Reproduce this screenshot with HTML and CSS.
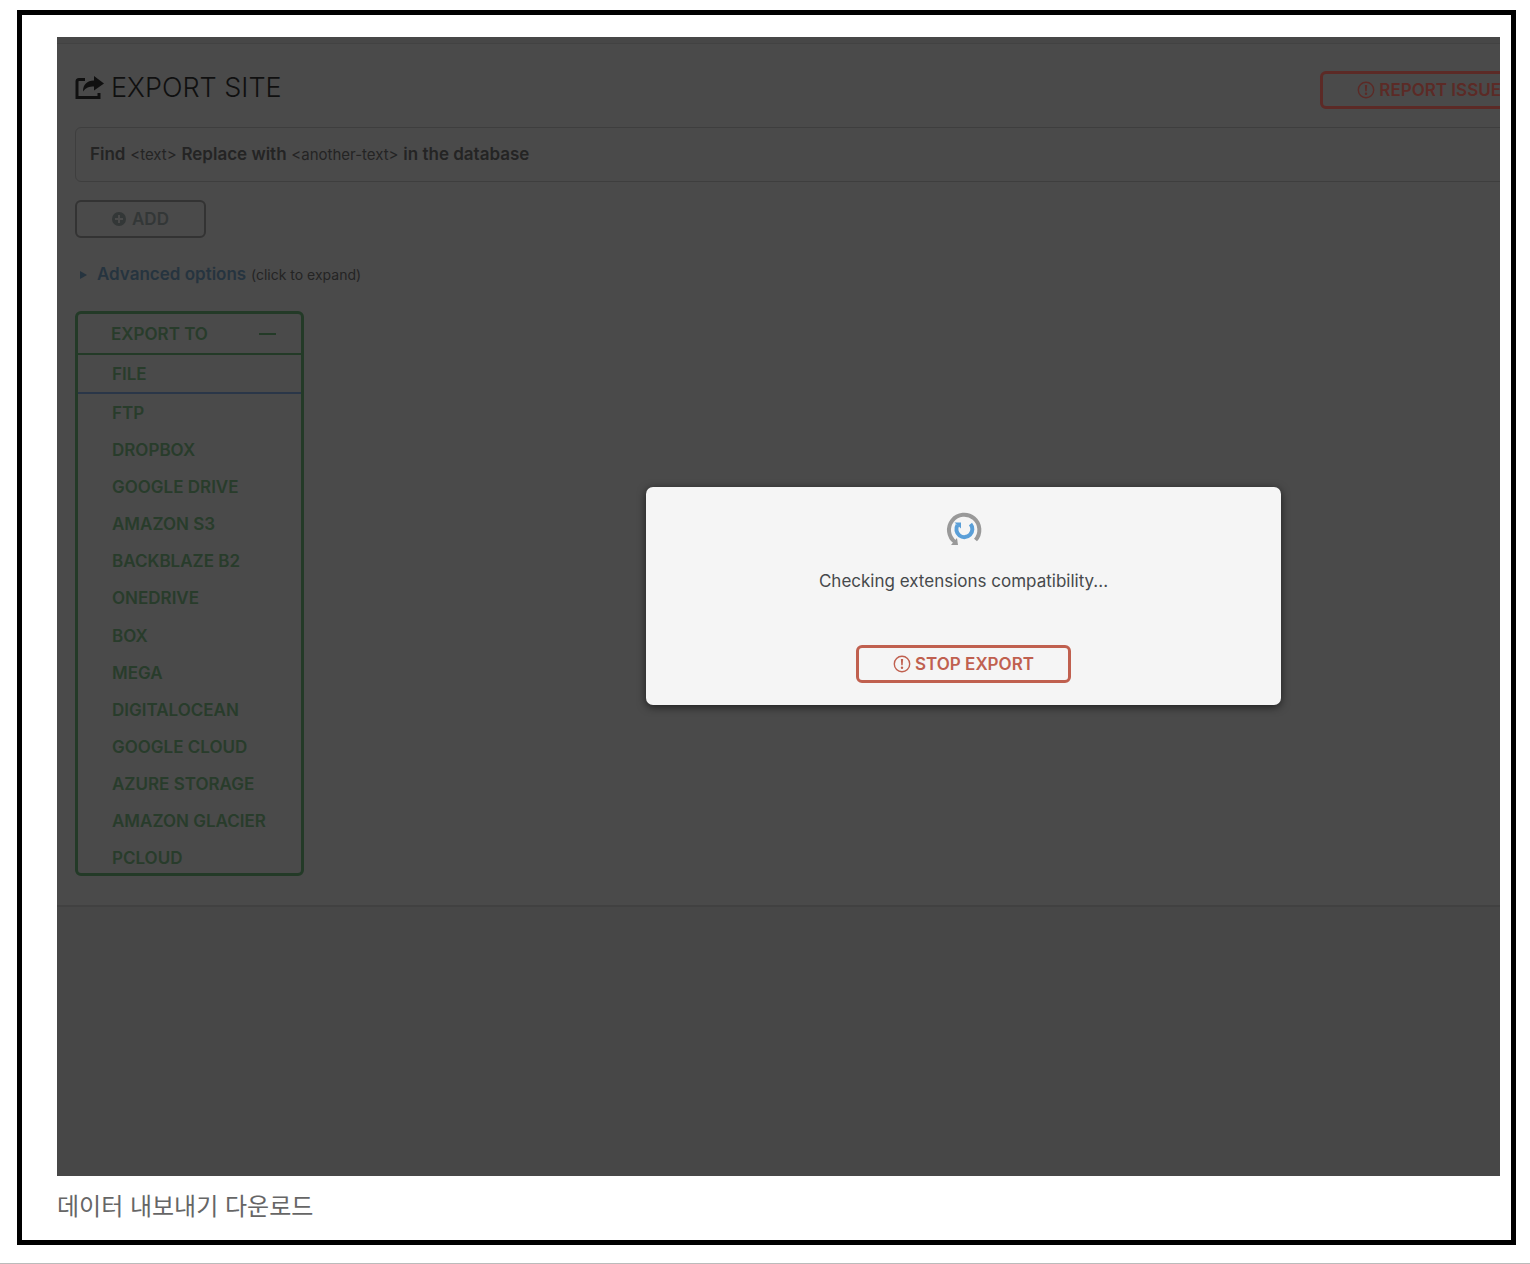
FILE: index.html
```html
<!DOCTYPE html>
<html lang="ko">
<head>
    <meta charset="UTF-8">
    <meta name="viewport" content="width=device-width, initial-scale=1.0">
    <title>데이터 내보내기 다운로드</title>
    <link rel="stylesheet" href="styles.css">
</head>
<body>
    <figure class="frame">
        <div class="screen">
            <main class="panel">
                <header class="panel-header">
                    <h1>
                        <svg class="share-icon" viewBox="0 0 30 24" aria-hidden="true">
                            <path d="M10 3.500H4Q2 3.500 2 5.500V21.500H24V17" fill="none" stroke="currentColor" stroke-width="3"/>
                            <path d="M19 0l10 7.500-10 7v-4c-5 0-8 1-11 5 0-7 4-11 11-11z" fill="currentColor"/>
                        </svg>
                        EXPORT SITE
                    </h1>
                    <button class="button button-red-dim" type="button">
                        <svg class="alert-icon" viewBox="0 0 18 18" aria-hidden="true">
                            <circle cx="9" cy="9" r="7.700" fill="none" stroke="currentColor" stroke-width="1.400"/>
                            <path d="M7.900 4h2.200l-.4 6.300H8.300z" fill="currentColor"/>
                            <circle cx="9" cy="12.800" r="1.200" fill="currentColor"/>
                        </svg>
                        REPORT ISSUE
                    </button>
                </header>

                <div class="find-box">
                    <b>Find</b> <small>&lt;text&gt;</small> <b>Replace with</b> <small>&lt;another-text&gt;</small> <b>in the database</b>
                </div>

                <button class="button button-add" type="button">
                    <svg class="plus-icon" viewBox="0 0 14 14" aria-hidden="true">
                        <circle cx="7" cy="7" r="7" fill="currentColor"/>
                        <path d="M7 3v8M3 7h8" stroke="#4a4a4a" stroke-width="2"/>
                    </svg>
                    ADD
                </button>

                <details class="advanced">
                    <summary>
                        <svg class="arrow-icon" viewBox="0 0 7 8" aria-hidden="true"><path d="M0 0l7 4-7 4z" fill="currentColor"/></svg>
                        <span><a href="#">Advanced options</a> <small>(click to expand)</small></span>
                    </summary>
                </details>

                <nav class="export-menu">
                    <button class="export-toggle" type="button">
                        EXPORT TO
                        <span class="minus"></span>
                    </button>
                    <ul>
                        <li class="active"><a href="#">FILE</a></li>
                        <li><a href="#">FTP</a></li>
                        <li><a href="#">DROPBOX</a></li>
                        <li><a href="#">GOOGLE DRIVE</a></li>
                        <li><a href="#">AMAZON S3</a></li>
                        <li><a href="#">BACKBLAZE B2</a></li>
                        <li><a href="#">ONEDRIVE</a></li>
                        <li><a href="#">BOX</a></li>
                        <li><a href="#">MEGA</a></li>
                        <li><a href="#">DIGITALOCEAN</a></li>
                        <li><a href="#">GOOGLE CLOUD</a></li>
                        <li><a href="#">AZURE STORAGE</a></li>
                        <li><a href="#">AMAZON GLACIER</a></li>
                        <li><a href="#">PCLOUD</a></li>
                    </ul>
                </nav>
            </main>

            <div class="overlay">
                <div class="modal" role="dialog" aria-label="Export">
                    <svg class="spinner" viewBox="0 0 36 36" aria-hidden="true">
                        <path d="M9 30A15.200 15.200 0 1 1 29.500 28" fill="none" stroke="#999" stroke-width="4"/>
                        <path d="M5 33l6-7 1 7z" fill="#999"/>
                        <path d="M11.500 13A8 8 0 1 0 24.500 12" fill="none" stroke="#5a9fd8" stroke-width="4"/>
                        <path d="M8.500 10.500h6.500v6z" fill="#5a9fd8"/>
                    </svg>
                    <p>Checking extensions compatibility...</p>
                    <button class="button button-red" type="button">
                        <svg class="alert-icon" viewBox="0 0 18 18" aria-hidden="true">
                            <circle cx="9" cy="9" r="7.700" fill="none" stroke="currentColor" stroke-width="1.400"/>
                            <path d="M7.900 4h2.200l-.4 6.300H8.300z" fill="currentColor"/>
                            <circle cx="9" cy="12.800" r="1.200" fill="currentColor"/>
                        </svg>
                        STOP EXPORT
                    </button>
                </div>
            </div>
        </div>
        <figcaption>데이터 내보내기 다운로드</figcaption>
    </figure>
</body>
</html>
```

FILE: styles.css
```css
* {
    box-sizing: border-box;
}

body {
    margin: 0;
    padding: 10px 14px 18px 17px;
    background-color: #fff;
    border-bottom: 1px solid #bbb;
    font-family: Inter, "Liberation Sans", "Noto Sans CJK KR", sans-serif;
    font-size: 17px;
}

.frame {
    margin: 0;
    padding: 22px 11px 19px 35px;
    border: 5px solid #000;
}

.screen {
    position: relative;
    overflow: hidden;
    min-height: 1139px;
    padding-top: 6px;
    background-color: #474747;
    color: #242424;
}

/* the panel runs on past the right edge of the screen */
.panel {
    padding: 27px 0 29px 18px;
    margin-right: -40px;
    background-color: #4a4a4a;
    border-top: 1px solid #424242;
    border-bottom: 2px solid #414141;
}

.panel-header {
    display: flex;
    justify-content: space-between;
    align-items: center;
    margin-bottom: 18px;
    padding-right: 2px;
}

h1 {
    display: flex;
    align-items: center;
    gap: 6px;
    margin: 0 0 4px;
    font-size: 27px;
    line-height: 34px;
    font-weight: 300;
    color: #101010;
}

.share-icon {
    width: 30px;
    height: 24px;
}

.button {
    display: flex;
    align-items: center;
    justify-content: center;
    gap: 4px;
    height: 38px;
    padding: 0 34px;
    border: 3px solid;
    border-radius: 6px;
    background: none;
    font-family: inherit;
    font-size: 17px;
    font-weight: 600;
    cursor: pointer;
}

.button-red-dim {
    color: #5c2a26;
}

.button-red {
    color: #c0604f;
}

.button-add {
    gap: 6px;
    margin: 18px 0 24px;
    padding: 0 35px;
    color: #333737;
    border: 2px solid #333;
}

.alert-icon {
    width: 18px;
    height: 18px;
}

.plus-icon {
    width: 14px;
    height: 14px;
}

.find-box {
    padding: 14px;
    border: 1px solid #3e3e3e;
    border-radius: 6px;
    line-height: 24px;
}

b {
    font-weight: 600;
}

small {
    font-size: 14px;
}

.find-box small {
    font-size: 15px;
}

.advanced summary {
    display: flex;
    align-items: center;
    gap: 10px;
    padding-left: 5px;
    line-height: 24px;
    list-style: none;
    cursor: pointer;
}

.advanced a {
    color: #26343f;
    font-weight: 600;
    text-decoration: none;
}

.arrow-icon {
    width: 7px;
    height: 8px;
    color: #26343f;
}

.export-menu {
    width: 229px;
    margin-top: 24px;
    border: 3px solid #233a27;
    border-radius: 6px;
    font-weight: 600;
}

.export-toggle {
    display: flex;
    align-items: center;
    justify-content: space-between;
    width: 100%;
    height: 41px;
    padding: 0 25px 0 33px;
    border: none;
    border-bottom: 2px solid #233a27;
    background: none;
    color: #283c2b;
    font: inherit;
    cursor: pointer;
}

.minus {
    width: 17px;
    height: 2px;
    background-color: #233a27;
}

.export-menu ul {
    display: flex;
    flex-direction: column;
    height: 522px;
    margin: 0 0 -4px;
    padding: 0;
    list-style: none;
}

.export-menu li {
    display: flex;
    flex: 1;
    align-items: center;
    padding-left: 34px;
}

.export-menu .active {
    border-bottom: 2px solid #2a3648;
}

.export-menu a {
    color: #283c2b;
    text-decoration: none;
}

.overlay {
    position: absolute;
    inset: 0;
    display: flex;
    align-items: center;
    justify-content: center;
    padding: 0 0 22px 370px;
}

.modal {
    display: flex;
    flex-direction: column;
    align-items: center;
    width: 635px;
    padding: 25px 20px 22px;
    border-radius: 7px;
    background-color: #f5f5f5;
    box-shadow: 0 2px 8px rgba(0, 0, 0, 0.6);
}

.spinner {
    width: 36px;
    height: 36px;
}

.modal p {
    margin: 20px 0 51px;
    line-height: 26px;
    color: #46494c;
}

figcaption {
    margin-top: 12px;
    font-family: "Noto Sans CJK KR", sans-serif;
    font-size: 24px;
    line-height: 33px;
    color: #666;
}
```
